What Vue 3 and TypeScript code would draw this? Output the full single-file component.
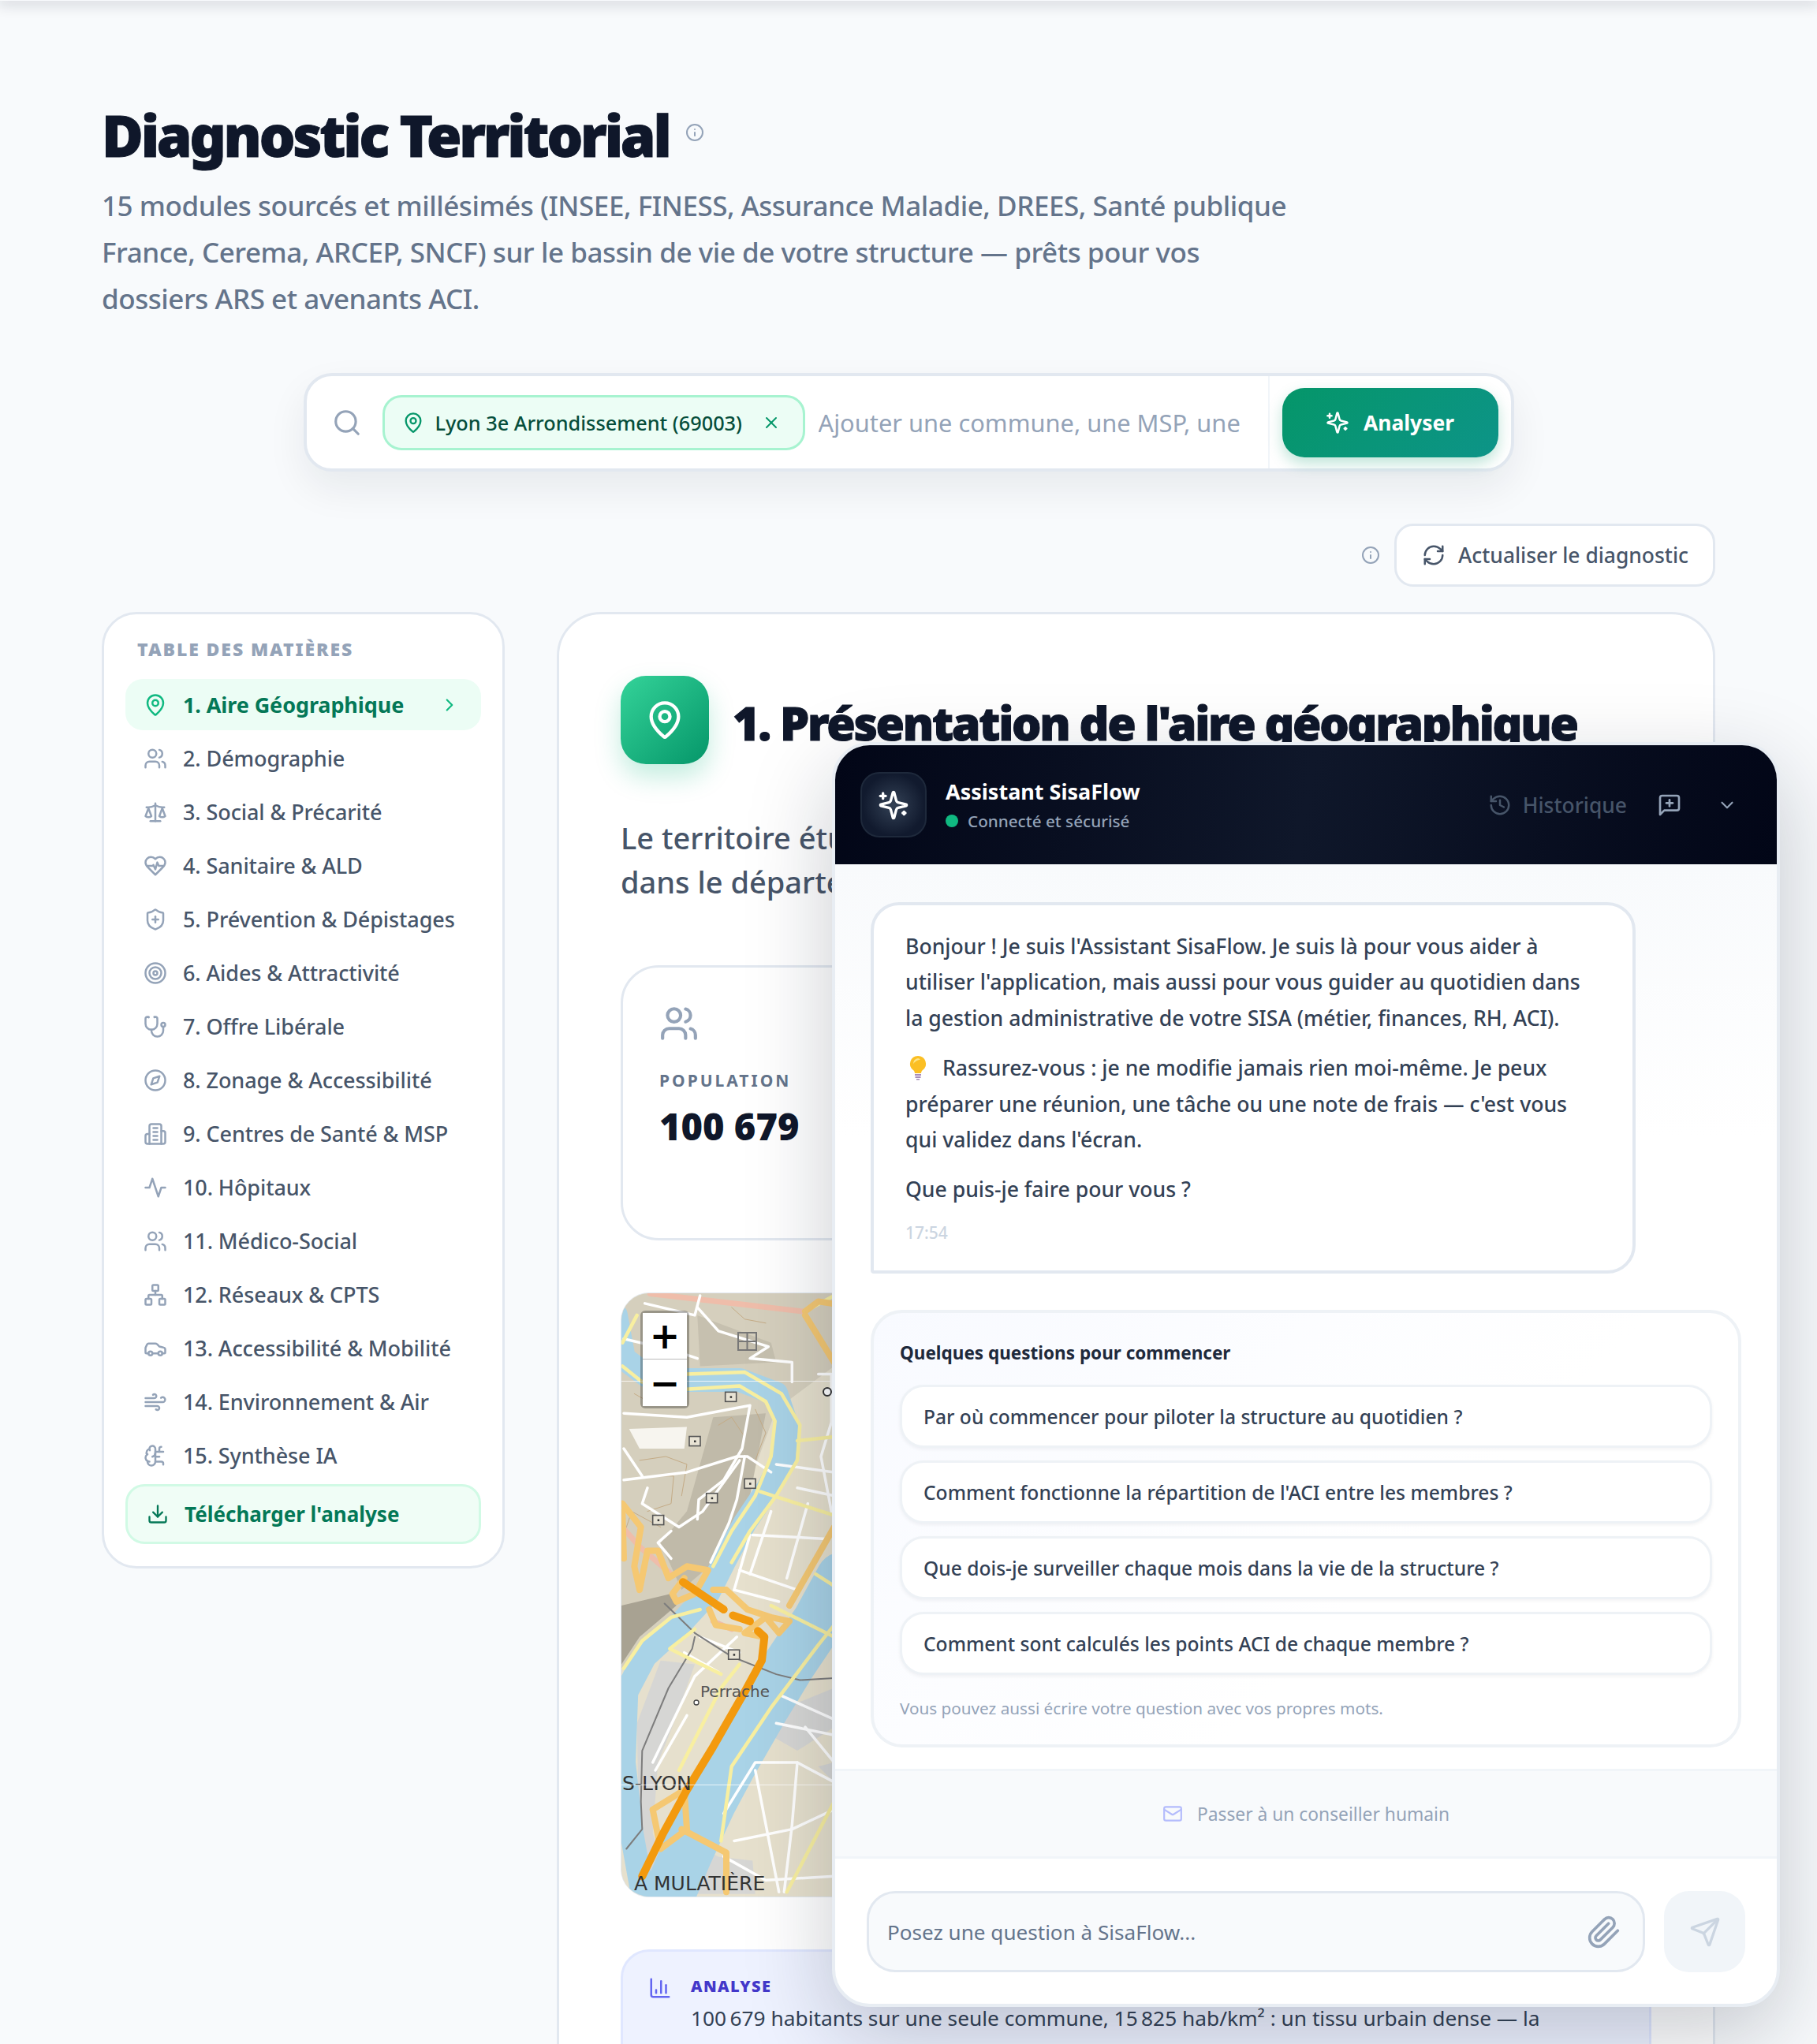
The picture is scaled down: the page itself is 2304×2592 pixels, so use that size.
<script setup lang="ts">
import { h } from 'vue';
import type { FunctionalComponent } from 'vue';

const c = (x: number, y: number, r: number) => `<circle cx="${x}" cy="${y}" r="${r}"/>`;
const p = (...ds: string[]) => ds.map((d) => `<path d="${d}"/>`).join('');

const icons: Record<string, string> = {
  pin: p('M20 10c0 4.993-5.539 10.193-7.399 11.799a1 1 0 0 1-1.202 0C9.539 20.193 4 14.993 4 10a8 8 0 0 1 16 0') + c(12, 10, 3),
  users: p('M16 21v-2a4 4 0 0 0-4-4H6a4 4 0 0 0-4 4v2', 'M22 21v-2a4 4 0 0 0-3-3.87', 'M16 3.13a4 4 0 0 1 0 7.75') + c(9, 7, 4),
  scale: p('m16 16 3-8 3 8c-.87.65-1.92 1-3 1s-2.13-.35-3-1Z', 'm2 16 3-8 3 8c-.87.65-1.92 1-3 1s-2.13-.35-3-1Z', 'M7 21h10', 'M12 3v18', 'M3 7h2c2 0 5-1 7-2 2 1 5 2 7 2h2'),
  heart: p('M19 14c1.49-1.46 3-3.21 3-5.5A5.5 5.5 0 0 0 16.5 3c-1.76 0-3 .5-4.5 2-1.5-1.5-2.74-2-4.5-2A5.5 5.5 0 0 0 2 8.5c0 2.3 1.5 4.05 3 5.5l7 7Z', 'M3.22 12H9.5l.5-1 2 4.5 2-7 1.5 3.5h5.27'),
  shield: p('M20 13c0 5-3.5 7.5-7.66 8.95a1 1 0 0 1-.67-.01C7.5 20.5 4 18 4 13V6a1 1 0 0 1 1-1c2 0 4.5-1.2 6.24-2.72a1.17 1.17 0 0 1 1.52 0C14.51 3.81 17 5 19 5a1 1 0 0 1 1 1z', 'M9 12h6', 'M12 9v6'),
  target: c(12, 12, 10) + c(12, 12, 6) + c(12, 12, 2),
  stetho: p('M4.8 2.3A.3.3 0 1 0 5 2H4a2 2 0 0 0-2 2v5a6 6 0 0 0 6 6 6 6 0 0 0 6-6V4a2 2 0 0 0-2-2h-1a.2.2 0 1 0 .3.3', 'M8 15v1a6 6 0 0 0 6 6 6 6 0 0 0 6-6v-4') + c(20, 10, 2),
  compass: c(12, 12, 10) + p('m16.24 7.76-2.12 6.36-6.36 2.12 2.12-6.36 6.36-2.12z'),
  building: p('M6 22V4a2 2 0 0 1 2-2h8a2 2 0 0 1 2 2v18Z', 'M6 12H4a2 2 0 0 0-2 2v6a2 2 0 0 0 2 2h2', 'M18 9h2a2 2 0 0 1 2 2v9a2 2 0 0 1-2 2h-2', 'M10 6h4', 'M10 10h4', 'M10 14h4', 'M10 18h4'),
  activity: p('M22 12h-4l-3 9L9 3l-3 9H2'),
  network: '<rect x="16" y="16" width="6" height="6" rx="1"/><rect x="2" y="16" width="6" height="6" rx="1"/><rect x="9" y="2" width="6" height="6" rx="1"/>' + p('M5 16v-3a1 1 0 0 1 1-1h12a1 1 0 0 1 1 1v3', 'M12 12V8'),
  car: p('M19 17h2c.6 0 1-.4 1-1v-3c0-.9-.7-1.7-1.5-1.9C18.7 10.6 16 10 16 10s-1.3-1.4-2.2-2.3c-.5-.4-1.1-.7-1.8-.7H5c-.6 0-1.1.4-1.4.9l-1.4 2.9A3.7 3.7 0 0 0 2 12v4c0 .6.4 1 1 1h2', 'M9 17h6') + c(7, 17, 2) + c(17, 17, 2),
  wind: p('M17.7 7.7a2.5 2.5 0 1 1 1.8 4.3H2', 'M9.6 4.6A2 2 0 1 1 11 8H2', 'M12.6 19.4A2 2 0 1 0 14 16H2'),
  brain: p('M12 5a3 3 0 1 0-5.997.125 4 4 0 0 0-2.526 5.77 4 4 0 0 0 .556 6.588A4 4 0 1 0 12 18Z', 'M9 13a4.5 4.5 0 0 0 3-4', 'M6.003 5.125A3 3 0 0 0 6.401 6.5', 'M3.477 10.896a4 4 0 0 1 .585-.396', 'M6 18a4 4 0 0 1-1.967-.516', 'M12 13h4', 'M12 18h6a2 2 0 0 1 2 2v1', 'M12 8h8', 'M16 8V5a2 2 0 0 1 2-2'),
  download: p('M21 15v4a2 2 0 0 1-2 2H5a2 2 0 0 1-2-2v-4', 'm7 10 5 5 5-5', 'M12 15V3'),
  right: p('m9 18 6-6-6-6'),
  down: p('m6 9 6 6 6-6'),
  search: c(11, 11, 8) + p('m21 21-4.3-4.3'),
  x: p('M18 6 6 18', 'm6 6 12 12'),
  sparkles: p('M9.937 15.5A2 2 0 0 0 8.5 14.063l-6.135-1.582a.5.5 0 0 1 0-.962L8.5 9.936A2 2 0 0 0 9.937 8.5l1.582-6.135a.5.5 0 0 1 .963 0L14.063 8.5A2 2 0 0 0 15.5 9.937l6.135 1.581a.5.5 0 0 1 0 .964L15.5 14.063a2 2 0 0 0-1.437 1.437l-1.582 6.135a.5.5 0 0 1-.963 0z', 'M20 3v4', 'M22 5h-4', 'M4 17v2', 'M5 18H3'),
  refresh: p('M3 12a9 9 0 0 1 9-9 9.75 9.75 0 0 1 6.74 2.74L21 8', 'M21 3v5h-5', 'M21 12a9 9 0 0 1-9 9 9.75 9.75 0 0 1-6.74-2.74L3 16', 'M8 16H3v5'),
  info: c(12, 12, 10) + p('M12 16v-4', 'M12 8h.01'),
  history: p('M3 12a9 9 0 1 0 9-9 9.75 9.75 0 0 0-6.74 2.74L3 8', 'M3 3v5h5', 'M12 7v5l4 2'),
  chatplus: p('M21 15a2 2 0 0 1-2 2H7l-4 4V5a2 2 0 0 1 2-2h14a2 2 0 0 1 2 2z', 'M12 7v6', 'M9 10h6'),
  mail: '<rect x="2" y="4" width="20" height="16" rx="2"/>' + p('m22 7-8.97 5.7a1.94 1.94 0 0 1-2.06 0L2 7'),
  clip: p('m21.44 11.05-9.19 9.19a6 6 0 0 1-8.49-8.49l8.57-8.57A4 4 0 1 1 18 8.84l-8.59 8.57a2 2 0 0 1-2.83-2.83l8.49-8.48'),
  send: p('M14.536 21.686a.5.5 0 0 0 .937-.024l6.5-19a.496.496 0 0 0-.635-.635l-19 6.5a.5.5 0 0 0-.024.937l7.93 3.18a2 2 0 0 1 1.112 1.11z', 'm21.854 2.147-10.94 10.939'),
  chart: p('M3 3v16a2 2 0 0 0 2 2h16', 'M18 17V9', 'M13 17V5', 'M8 17v-3'),
};

const Icon: FunctionalComponent<{ name: string }> = (props) =>
  h('svg', {
    viewBox: '0 0 24 24',
    fill: 'none',
    stroke: 'currentColor',
    'stroke-width': 2,
    'stroke-linecap': 'round',
    'stroke-linejoin': 'round',
    innerHTML: icons[props.name],
  });
Icon.props = ['name'];

const sections = [
  { icon: 'pin', label: '1. Aire Géographique', active: true },
  { icon: 'users', label: '2. Démographie' },
  { icon: 'scale', label: '3. Social & Précarité' },
  { icon: 'heart', label: '4. Sanitaire & ALD' },
  { icon: 'shield', label: '5. Prévention & Dépistages' },
  { icon: 'target', label: '6. Aides & Attractivité' },
  { icon: 'stetho', label: '7. Offre Libérale' },
  { icon: 'compass', label: '8. Zonage & Accessibilité' },
  { icon: 'building', label: '9. Centres de Santé & MSP' },
  { icon: 'activity', label: '10. Hôpitaux' },
  { icon: 'users', label: '11. Médico-Social' },
  { icon: 'network', label: '12. Réseaux & CPTS' },
  { icon: 'car', label: '13. Accessibilité & Mobilité' },
  { icon: 'wind', label: '14. Environnement & Air' },
  { icon: 'brain', label: '15. Synthèse IA' },
];

const questions = [
  'Par où commencer pour piloter la structure au quotidien ?',
  "Comment fonctionne la répartition de l'ACI entre les membres ?",
  'Que dois-je surveiller chaque mois dans la vie de la structure ?',
  'Comment sont calculés les points ACI de chaque membre ?',
];

// map geometry is noted in crop coordinates, then scaled down to the tile size
const pts = (flat: number[]) => {
  const out: string[] = [];
  for (let i = 0; i < flat.length; i += 2) {
    out.push(`${(flat[i] / 3 - 17).toFixed(1)},${(flat[i + 1] / 2.01 - 2).toFixed(1)}`);
  }
  return out.join(' ');
};

const hills = [
  { fill: '#d5cfbd', at: [51, 4, 860, 4, 860, 190, 640, 300, 520, 520, 430, 690, 250, 830, 51, 960] },
  { fill: '#c0baa9', at: [400, 320, 600, 310, 540, 520, 420, 680, 280, 760, 200, 640, 300, 560] },
  { fill: '#a8a292', at: [51, 800, 240, 770, 260, 800, 120, 880, 51, 950] },
  { fill: '#c6c0af', at: [340, 60, 620, 130, 640, 180, 350, 190] },
  { fill: '#f7f5ef', at: [80, 350, 300, 345, 290, 400, 120, 400] },
];
const contours = [
  [120, 430, 220, 420, 300, 440, 280, 520], [180, 470, 250, 470, 240, 540, 150, 560], [60, 620, 90, 560, 200, 600],
  [420, 340, 470, 320, 520, 370], [560, 300, 600, 360, 560, 430], [100, 260, 180, 290, 280, 280], [470, 40, 520, 70, 600, 80],
];
const grey = [
  [110, 1100, 200, 940, 330, 950, 250, 1100, 190, 1200, 170, 1380, 240, 1535, 120, 1500],
  [640, 1070, 860, 1010, 860, 1110, 720, 1170, 590, 1120],
  [300, 1400, 420, 1440, 550, 1450, 560, 1535, 280, 1535],
  [800, 1210, 860, 1200, 860, 1250],
];
const water = [
  { w: 30, at: [30, 60, 60, 170, 150, 215, 300, 225, 500, 225, 640, 260, 680, 340, 670, 420, 610, 500, 520, 590, 440, 690, 380, 770, 270, 850, 140, 930, 70, 1020, 60, 1200, 90, 1380, 130, 1530] },
  { w: 66, at: [890, 730, 800, 840, 690, 950, 590, 1060, 470, 1200, 390, 1300, 300, 1430, 230, 1540] },
];
const white = [
  [140, 30, 330, 60, 350, 10], [340, 40, 420, 100, 610, 140, 540, 170, 700, 180, 700, 230],
  [60, 310, 300, 320, 540, 290, 510, 400, 440, 480, 345, 530, 340, 580], [60, 480, 300, 460, 490, 420, 530, 420, 620, 460],
  [150, 500, 130, 540, 270, 600, 360, 560, 500, 430], [390, 690, 460, 590, 490, 530, 520, 420],
  [60, 120, 250, 150, 340, 170], [60, 400, 130, 470], [240, 610, 190, 640, 240, 680],
  [550, 620, 830, 630], [540, 620, 480, 760], [620, 560, 540, 720], [760, 540, 680, 730], [500, 710, 720, 760], [480, 760, 650, 790],
  [860, 310, 810, 420, 850, 560], [800, 210, 850, 210, 850, 330], [640, 440, 860, 460], [720, 500, 860, 520],
  [170, 1200, 330, 980, 490, 880], [300, 1080, 180, 1220], [350, 880, 500, 920], [290, 920, 420, 970],
  [440, 1330, 560, 1200, 720, 1200, 860, 1250], [640, 1100, 860, 1130], [560, 1220, 650, 1530], [480, 1400, 700, 1370, 860, 1320],
  [720, 1200, 700, 1360, 670, 1530], [750, 1110, 860, 1200], [440, 1440, 600, 1500, 860, 1490], [660, 1030, 860, 1090],
];
const yellow = [
  [55, 190, 130, 230, 300, 210, 520, 205, 660, 260, 730, 340, 720, 430, 640, 520, 540, 610, 470, 690],
  [260, 250, 500, 240, 600, 280, 635, 330, 620, 420, 560, 520, 470, 610, 400, 700],
  [60, 960, 130, 890, 240, 830, 350, 810], [580, 510, 860, 570], [720, 380, 860, 370],
  [430, 975, 235, 910, 330, 860], [620, 800, 860, 880], [270, 1220, 430, 1010, 500, 950],
  [430, 1400, 470, 1210, 620, 1060, 800, 900, 860, 850], [860, 1300, 720, 1480, 680, 1530],
  [860, 750, 790, 720], [55, 130, 110, 60], [750, 50, 860, 10],
];
const pink = [[160, 5, 740, 50], [120, 650, 240, 720], [55, 600, 120, 650], [400, 840, 470, 860]];
const trunk = [
  [55, 540, 125, 600, 100, 700, 120, 760, 150, 660, 190, 660, 230, 730, 300, 700, 380, 710, 330, 770, 260, 790, 245, 770, 290, 730],
  [400, 760, 450, 760, 530, 810, 620, 830, 690, 840, 650, 870, 600, 830, 520, 870, 590, 880],
  [385, 810, 410, 850, 500, 860], [690, 800, 860, 600], [170, 1320, 290, 1270, 300, 1370, 200, 1420, 170, 1320],
  [280, 1370, 450, 1430, 450, 1530], [750, 50, 800, 25, 850, 30], [750, 60, 860, 180], [60, 680, 55, 560],
];
const motorway = [
  [285, 740, 440, 810], [475, 825, 540, 840],
  [570, 865, 595, 880, 585, 940, 520, 1020, 400, 1160, 300, 1270, 210, 1380, 130, 1490],
];
const rail = [
  [215, 795, 330, 870, 470, 930, 640, 975, 730, 990, 860, 985],
  [330, 880, 320, 910, 230, 1010, 130, 1170, 125, 1300, 130, 1370, 70, 1420],
];
const stops = [[467, 268], [330, 381], [540, 489], [395, 526], [191, 582], [479, 925]].map(
  ([x, y]) => ({ x: x / 3 - 17, y: y / 2.01 - 2 }),
);
</script>

<template>
  <div class="page">
    <div class="topbar"></div>

    <main class="wrap">
      <header class="intro">
        <div class="title-row">
          <h1>Diagnostic Territorial</h1>
          <Icon name="info" class="info-ico" />
        </div>
        <p class="lead">
          15 modules sourcés et millésimés (INSEE, FINESS, Assurance Maladie, DREES, Santé publique
          France, Cerema, ARCEP, SNCF) sur le bassin de vie de votre structure — prêts pour vos
          dossiers ARS et avenants ACI.
        </p>
      </header>

      <div class="search">
        <Icon name="search" class="search-ico" />
        <div class="chip">
          <Icon name="pin" class="chip-pin" />
          <span>Lyon 3e Arrondissement (69003)</span>
          <Icon name="x" class="chip-x" />
        </div>
        <span class="placeholder">Ajouter une commune, une MSP, une</span>
        <div class="search-action">
          <button class="analyse">
            <Icon name="sparkles" class="analyse-ico" />
            Analyser
          </button>
        </div>
      </div>

      <div class="refresh-row">
        <Icon name="info" class="info-ico small" />
        <button class="refresh">
          <Icon name="refresh" class="refresh-ico" />
          Actualiser le diagnostic
        </button>
      </div>

      <div class="columns">
        <aside class="toc">
          <div class="toc-title">TABLE DES MATIÈRES</div>
          <nav class="toc-list">
            <a v-for="s in sections" :key="s.label" class="toc-item" :class="{ active: s.active }">
              <Icon :name="s.icon" class="toc-ico" />
              <span class="toc-label">{{ s.label }}</span>
              <Icon v-if="s.active" name="right" class="toc-chevron" />
            </a>
          </nav>
          <button class="toc-download">
            <Icon name="download" class="toc-dl-ico" />
            Télécharger l'analyse
          </button>
        </aside>

        <section class="card">
          <div class="card-head">
            <div class="tile"><Icon name="pin" class="tile-ico" /></div>
            <h2>1. Présentation de l'aire géographique</h2>
          </div>
          <p class="card-lead">
            Le territoire étudié regroupe une commune<br />
            dans le département du Rhône.
          </p>

          <div class="stat">
            <Icon name="users" class="stat-ico" />
            <div class="stat-label">POPULATION</div>
            <div class="stat-value">100 679</div>
          </div>

          <div class="map">
            <svg class="map-svg" width="271" height="765" viewBox="0 0 271 765">
              <rect width="271" height="765" fill="#e6e0cd" />
              <polygon v-for="(z, i) in hills" :key="'h' + i" :points="pts(z.at)" :fill="z.fill" />
              <polyline v-for="(l, i) in contours" :key="'c' + i" :points="pts(l)" class="line" stroke="#c4ab86" stroke-width="1" />
              <polygon v-for="(z, i) in grey" :key="'g' + i" :points="pts(z)" fill="#d6d6d4" />
              <polyline v-for="(l, i) in water" :key="'w' + i" :points="pts(l.at)" class="line" stroke="#a9d3e7" :stroke-width="l.w" />
              <polyline v-for="(l, i) in pink" :key="'p' + i" :points="pts(l)" class="line" stroke="#efbdaa" stroke-width="7" />
              <polyline v-for="(l, i) in white" :key="'r' + i" :points="pts(l)" class="line" stroke="#ffffff" stroke-width="3.5" />
              <polyline v-for="(l, i) in rail" :key="'t' + i" :points="pts(l)" class="line" stroke="#7d7d7d" stroke-width="2" />
              <polyline v-for="(l, i) in yellow" :key="'y' + i" :points="pts(l)" class="line" stroke="#f8efa0" stroke-width="4.5" />
              <polyline v-for="(l, i) in trunk" :key="'o' + i" :points="pts(l)" class="line" stroke="#f5c872" stroke-width="8" />
              <polyline v-for="(l, i) in motorway" :key="'m' + i" :points="pts(l)" class="line" stroke="#f39a0e" stroke-width="10" />
              <g v-for="(s, i) in stops" :key="'s' + i">
                <rect :x="s.x - 7" :y="s.y - 6" width="14" height="12" fill="#e8e3d4" stroke="#555" stroke-width="1.6" />
                <rect :x="s.x - 1" :y="s.y - 1" width="2.5" height="2.5" fill="#333" />
              </g>
              <g fill="none" stroke="#777" stroke-width="2">
                <rect x="148" y="50" width="23" height="22" />
                <path d="M148 61h23M159.500 50v22" />
              </g>
              <circle cx="261" cy="125" r="5" fill="#fff" stroke="#333" stroke-width="2" />
              <rect x="267" y="88" width="4" height="24" fill="#333" />
              <circle cx="95" cy="519" r="3" fill="#fff" stroke="#444" stroke-width="1.300" />
              <text x="100" y="512" class="map-town">Perrache</text>
              <text x="1" y="630" class="map-label">S-LYON</text>
              <text x="16" y="757" class="map-label">A MULATIÈRE</text>
              <path d="M0 111.500h271M0 623.500h271" stroke="#fff" stroke-opacity=".75" stroke-width="1" />
            </svg>
            <div class="zoom-ctl">
              <span class="zoom-btn">+</span>
              <span class="zoom-btn">−</span>
            </div>
          </div>

          <div class="analysis">
            <Icon name="chart" class="analysis-ico" />
            <div class="analysis-body">
              <div class="analysis-title">ANALYSE</div>
              <p>100&#8239;679 habitants sur une seule commune, 15&#8239;825 hab/km² : un tissu urbain dense — la</p>
            </div>
          </div>
        </section>
      </div>
    </main>

    <div class="chat">
      <div class="chat-head">
        <div class="avatar"><Icon name="sparkles" class="avatar-ico" /></div>
        <div class="chat-id">
          <div class="chat-name">Assistant SisaFlow</div>
          <div class="chat-status"><i class="dot"></i>Connecté et sécurisé</div>
        </div>
        <div class="chat-tools">
          <span class="history"><Icon name="history" class="history-ico" />Historique</span>
          <Icon name="chatplus" class="tool-ico" />
          <Icon name="down" class="tool-ico chevron" />
        </div>
      </div>

      <div class="chat-body">
        <div class="bubble">
          <p>Bonjour ! Je suis l'Assistant SisaFlow. Je suis là pour vous aider à utiliser l'application, mais aussi pour vous guider au quotidien dans la gestion administrative de votre SISA (métier, finances, RH, ACI).</p>
          <p>
            <svg class="bulb" viewBox="0 0 24 32">
              <path d="M12 1a10 10 0 0 0-6 18c1.300 1.100 1.800 2.400 2 4h8c.2-1.600.7-2.900 2-4a10 10 0 0 0-6-18z" fill="#fbbf24" />
              <path d="M12 4a7 7 0 0 0-6 7c2-3 6-5 9-5.500A7 7 0 0 0 12 4z" fill="#fde68a" />
              <path d="M8 24h8v2H8zM8.500 27h7v2h-7zM10 30h4v1.500h-4z" fill="#a78bba" />
            </svg>
            Rassurez-vous : je ne modifie jamais rien moi-même. Je peux préparer une réunion, une tâche ou une note de frais — c'est vous qui validez dans l'écran.
          </p>
          <p>Que puis-je faire pour vous ?</p>
          <div class="bubble-time">17:54</div>
        </div>

        <div class="starters">
          <div class="starters-title">Quelques questions pour commencer</div>
          <button v-for="q in questions" :key="q" class="starter">{{ q }}</button>
          <div class="starters-hint">Vous pouvez aussi écrire votre question avec vos propres mots.</div>
        </div>
      </div>

      <div class="handoff"><Icon name="mail" class="handoff-ico" />Passer à un conseiller humain</div>

      <div class="composer">
        <div class="composer-input">
          <span>Posez une question à SisaFlow...</span>
          <Icon name="clip" class="clip-ico" />
        </div>
        <button class="send"><Icon name="send" class="send-ico" /></button>
      </div>
    </div>
  </div>
</template>

<style>
html,
body {
  margin: 0;
  background: #f8fafc;
}
</style>

<style scoped>
* {
  box-sizing: border-box;
}

.page {
  position: relative;
  width: 2304px;
  height: 2592px;
  overflow: hidden;
  background: #f8fafc;
  font-family: "Noto Sans", "Open Sans", sans-serif;
  color: #0f172a;
}

button {
  font-family: inherit;
  cursor: pointer;
}

p {
  margin: 0;
}

.topbar {
  height: 1px;
  box-shadow: 0 0 18px 3px rgba(15, 23, 42, 0.28);
}

.wrap {
  padding: 124px 129px 0;
}

.title-row {
  display: flex;
  align-items: center;
  gap: 20px;
}

h1 {
  margin: -2px 0 2px;
  font-size: 72px;
  line-height: 96px;
  font-weight: 900;
  letter-spacing: -3.200px;
  -webkit-text-stroke: 1px #0f172a;
  color: #0f172a;
  white-space: nowrap;
}

.info-ico {
  width: 24px;
  height: 24px;
  color: #94a3b8;
  margin-top: -10px;
}

.info-ico.small {
  margin-top: 0;
}

.lead {
  margin-top: 10px;
  max-width: 1530px;
  font-size: 35px;
  line-height: 59px;
  font-weight: 500;
  letter-spacing: -0.450px;
  color: #64748b;
}

.search {
  display: flex;
  align-items: center;
  width: 1535px;
  height: 125px;
  margin: 65px auto 0;
  padding-left: 32px;
  background: #fff;
  border: 4px solid #e2e8f0;
  border-radius: 36px;
  box-shadow: 0 22px 50px rgba(15, 23, 42, 0.07);
}

.search-ico {
  width: 38px;
  height: 38px;
  color: #94a3b8;
  flex: none;
}

.chip {
  display: flex;
  align-items: center;
  height: 70px;
  margin-left: 26px;
  padding: 0 22px;
  flex: none;
  width: 536px;
  background: #ecfdf5;
  border: 3px solid #a7f3d0;
  border-radius: 24px;
  font-size: 25.300px;
  font-weight: 500;
  color: #064e3b;
  white-space: nowrap;
}

.chip-pin {
  width: 28px;
  height: 28px;
  color: #059669;
  margin-right: 14px;
  flex: none;
}

.chip-x {
  width: 24px;
  height: 24px;
  color: #059669;
  margin-left: 25px;
  flex: none;
}

.placeholder {
  flex: 1;
  margin-left: 17px;
  font-size: 30.800px;
  color: #94a3b8;
  white-space: nowrap;
  overflow: hidden;
}

.search-action {
  display: flex;
  align-items: center;
  height: 100%;
  padding: 0 16px;
  border-left: 2px solid #f1f5f9;
}

.analyse {
  display: flex;
  align-items: center;
  justify-content: center;
  gap: 18px;
  width: 274px;
  height: 88px;
  border: 0;
  border-radius: 28px;
  background: linear-gradient(135deg, #059669, #0d9488);
  box-shadow: 0 8px 18px rgba(5, 150, 105, 0.25);
  color: #fff;
  font-size: 26.400px;
  font-weight: 700;
}

.analyse-ico {
  width: 30px;
  height: 30px;
  transform: scaleX(-1);
}

.refresh-row {
  display: flex;
  justify-content: flex-end;
  align-items: center;
  gap: 18px;
  margin-top: 66px;
}

.refresh {
  display: flex;
  align-items: center;
  gap: 16px;
  width: 407px;
  height: 80px;
  padding: 0 32px;
  background: #fff;
  border: 3px solid #e2e8f0;
  border-radius: 24px;
  font-size: 26.400px;
  font-weight: 500;
  color: #475569;
  white-space: nowrap;
}

.refresh-ico {
  width: 30px;
  height: 30px;
  flex: none;
}

.columns {
  display: grid;
  grid-template-columns: 511px 1469px;
  gap: 66px;
  margin-top: 32px;
  align-items: start;
}

.toc {
  padding: 30px 27px 28px;
  background: #fff;
  border: 3px solid #e2e8f0;
  border-radius: 44px;
}

.toc-title {
  padding-left: 15px;
  font-size: 23px;
  line-height: 28px;
  font-weight: 900;
  letter-spacing: 1.900px;
  color: #94a3b8;
}

.toc-list {
  display: flex;
  flex-direction: column;
  gap: 3px;
  margin-top: 24px;
}

.toc-item {
  display: flex;
  align-items: center;
  height: 65px;
  padding: 0 27px 0 23px;
  border-radius: 22px;
  font-size: 27px;
  letter-spacing: -0.100px;
  font-weight: 500;
  color: #475569;
}

.toc-item.active {
  background: #ecfdf5;
  color: #047857;
  font-weight: 700;
}

.toc-ico {
  width: 30px;
  height: 30px;
  margin-right: 20px;
  flex: none;
  color: #94a3b8;
}

.active .toc-ico,
.toc-chevron {
  color: #10b981;
}

.toc-label {
  flex: 1;
  white-space: nowrap;
}

.toc-chevron {
  width: 26px;
  height: 26px;
  flex: none;
}

.toc-download {
  display: flex;
  align-items: center;
  gap: 20px;
  width: 100%;
  height: 76px;
  margin-top: 4px;
  padding: 0 24px;
  background: #f0fdf6;
  border: 3px solid #d1fae5;
  border-radius: 24px;
  font-size: 26px;
  font-weight: 700;
  color: #047857;
  white-space: nowrap;
}

.toc-dl-ico {
  width: 28px;
  height: 28px;
}

.card {
  height: 1900px;
  padding: 78px 78px 0;
  background: #fff;
  border: 3px solid #e2e8f0;
  border-radius: 56px;
}

.card-head {
  display: flex;
  align-items: center;
  gap: 30px;
}

.tile {
  display: flex;
  align-items: center;
  justify-content: center;
  width: 112px;
  height: 112px;
  flex: none;
  border-radius: 32px;
  background: linear-gradient(135deg, #34d399, #059669);
  box-shadow: 0 16px 32px rgba(16, 185, 129, 0.25);
}

.tile-ico {
  width: 52px;
  height: 52px;
  color: #fff;
}

h2 {
  margin: 6px 0 0;
  font-size: 59px;
  line-height: 72px;
  font-weight: 900;
  letter-spacing: -2.300px;
  -webkit-text-stroke: 1px #0f172a;
  white-space: nowrap;
  color: #0f172a;
}

.card-lead {
  margin-top: 65px;
  font-size: 38px;
  line-height: 56px;
  font-weight: 500;
  color: #475569;
  white-space: nowrap;
}

.stat {
  width: 409px;
  height: 349px;
  margin-top: 78px;
  padding: 46px;
  background: #fff;
  border: 3px solid #e2e8f0;
  border-radius: 48px;
}

.stat-ico {
  display: block;
  width: 50px;
  height: 50px;
  color: #94a3b8;
}

.stat-label {
  margin-top: 33px;
  font-size: 21px;
  line-height: 28px;
  font-weight: 700;
  letter-spacing: 3px;
  color: #64748b;
}

.stat-value {
  margin-top: 16px;
  font-size: 47px;
  line-height: 56px;
  font-weight: 900;
  white-space: nowrap;
}

.map {
  position: relative;
  width: 1307px;
  height: 767px;
  margin-top: 66px;
  overflow: hidden;
  background: #e6e0cd;
  border: 1px solid #e2e8f0;
  border-radius: 36px;
}

.map-svg {
  display: block;
}

.line {
  fill: none;
  stroke-linecap: round;
  stroke-linejoin: round;
}

.map-town {
  font-family: "DejaVu Sans", sans-serif;
  font-size: 20px;
  fill: #555;
}

.map-label {
  font-family: "DejaVu Sans", sans-serif;
  font-size: 25px;
  fill: #333;
}

.zoom-ctl {
  position: absolute;
  left: 24px;
  top: 22px;
  display: flex;
  flex-direction: column;
  width: 62px;
  border: 3px solid rgba(0, 0, 0, 0.28);
  border-radius: 6px;
  background-clip: padding-box;
}

.zoom-btn {
  display: flex;
  align-items: center;
  justify-content: center;
  height: 59px;
  background: #fff;
  font-family: "DejaVu Sans", sans-serif;
  font-size: 46px;
  font-weight: 700;
  line-height: 1;
  color: #000;
}

.zoom-btn:first-child {
  border-bottom: 1px solid #bbb;
}

.analysis {
  display: flex;
  gap: 24px;
  height: 300px;
  margin-top: 66px;
  padding: 31px 32px;
  background: #eef2ff;
  border: 3px solid #e0e7ff;
  border-radius: 36px;
}

.analysis-ico {
  width: 30px;
  height: 30px;
  flex: none;
  color: #6366f1;
}

.analysis-title {
  font-size: 20px;
  line-height: 26px;
  font-weight: 900;
  letter-spacing: 1.400px;
  color: #4338ca;
}

.analysis p {
  margin-top: 4px;
  font-size: 26.300px;
  line-height: 46px;
  color: #334155;
}

.chat {
  position: absolute;
  left: 1055px;
  top: 941px;
  display: flex;
  flex-direction: column;
  width: 1202px;
  height: 1604px;
  overflow: hidden;
  background: #fff;
  border: 4px solid #e8edf3;
  border-radius: 48px;
  box-shadow: 0 36px 110px rgba(15, 23, 42, 0.22);
}

.chat-head {
  display: flex;
  align-items: center;
  height: 151px;
  flex: none;
  padding: 0 32px;
  background: linear-gradient(100deg, #020617, #0f172a 50%, #020617);
}

.avatar {
  display: flex;
  align-items: center;
  justify-content: center;
  width: 84px;
  height: 83px;
  flex: none;
  border: 2px solid #1e293b;
  border-radius: 24px;
  background: radial-gradient(circle, #334155, #111a2e 70%);
}

.avatar-ico {
  width: 40px;
  height: 40px;
  color: #fff;
  transform: scaleX(-1);
}

.chat-id {
  margin-left: 24px;
}

.chat-name {
  font-size: 27px;
  line-height: 38px;
  font-weight: 700;
  color: #fff;
}

.chat-status {
  display: flex;
  align-items: center;
  margin-top: 3px;
  font-size: 20.700px;
  line-height: 30px;
  font-weight: 500;
  color: #94a3b8;
}

.dot {
  width: 16px;
  height: 16px;
  margin-right: 12px;
  border-radius: 50%;
  background: #10b981;
}

.chat-tools {
  display: flex;
  align-items: center;
  margin-left: auto;
  padding-right: 18px;
}

.history {
  display: flex;
  align-items: center;
  gap: 14px;
  font-size: 26.400px;
  font-weight: 500;
  color: #475569;
}

.history-ico {
  width: 30px;
  height: 30px;
}

.tool-ico {
  width: 32px;
  height: 32px;
  margin-left: 38px;
  color: #94a3b8;
}

.tool-ico.chevron {
  width: 26px;
  height: 26px;
  margin-left: 44px;
}

.chat-body {
  flex: 1;
  padding: 48px 45px 0;
  background: linear-gradient(180deg, #f8fafc, #fff 30%);
}

.bubble {
  width: 970px;
  height: 471px;
  padding: 30px 40px 0;
  background: #fff;
  border: 4px solid #e2e8f0;
  border-radius: 36px 36px 36px 4px;
  font-size: 26.600px;
  line-height: 45.400px;
  font-weight: 500;
  color: #334155;
}

.bubble p + p {
  margin-top: 18px;
}

.bulb {
  width: 24px;
  height: 32px;
  margin: 0 12px 0 4px;
  vertical-align: -6px;
}

.bubble-time {
  margin-top: 16px;
  font-size: 21px;
  line-height: 30px;
  color: #cbd5e1;
}

.starters {
  display: flex;
  flex-direction: column;
  height: 555px;
  margin-top: 46px;
  padding: 36px 33px 0;
  background: linear-gradient(135deg, #f8faff, #fff 60%);
  border: 4px solid #eef2f6;
  border-radius: 40px;
}

.starters-title {
  margin-bottom: 25px;
  font-size: 22.500px;
  line-height: 30px;
  font-weight: 700;
  color: #1e293b;
}

.starter {
  flex: none;
  height: 80px;
  margin-bottom: 16px;
  padding: 0 27px;
  text-align: left;
  background: #fff;
  border: 3px solid #eef2f6;
  border-radius: 30px;
  box-shadow: 0 2px 4px rgba(15, 23, 42, 0.05);
  font-size: 24.600px;
  font-weight: 500;
  color: #334155;
}

.starters-hint {
  margin-top: 11px;
  font-size: 20.700px;
  line-height: 30px;
  color: #94a3b8;
}

.handoff {
  display: flex;
  align-items: center;
  justify-content: center;
  height: 114px;
  flex: none;
  background: #f8fafc;
  border-top: 3px solid #f1f5f9;
  border-bottom: 3px solid #f1f5f9;
  font-size: 22.800px;
  color: #94a3b8;
}

.handoff-ico {
  width: 26px;
  height: 26px;
  margin-right: 18px;
  color: #b4bcfc;
}

.composer {
  display: flex;
  gap: 24px;
  height: 184px;
  flex: none;
  padding: 41px 40px 0;
}

.composer-input {
  display: flex;
  align-items: center;
  justify-content: space-between;
  width: 988px;
  height: 103px;
  padding: 0 27px 0 23px;
  background: #f8fafc;
  border: 3px solid #e2e8f0;
  border-radius: 36px;
  font-size: 26.100px;
  color: #64748b;
}

.clip-ico {
  width: 44px;
  height: 44px;
  color: #94a3b8;
}

.send {
  display: flex;
  align-items: center;
  justify-content: center;
  width: 103px;
  height: 103px;
  padding: 0;
  border: 0;
  border-radius: 32px;
  background: #f1f5f9;
}

.send-ico {
  width: 40px;
  height: 40px;
  color: #cbd5e1;
}
</style>
